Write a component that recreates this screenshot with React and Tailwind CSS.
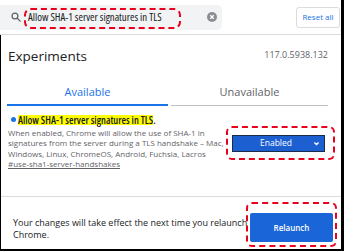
import React from "react";

export default function App() {
  return (
    <div className="relative w-[344px] h-[251px] overflow-hidden bg-white border-r-[3px] border-b-2 border-black font-['Open_Sans',sans-serif]">
      {/* header */}
      <div className="h-[35px] flex items-center border-b border-[#dadce0]">
        <div className="w-[222px] h-[25px] bg-[#f1f3f4] rounded-r-[5px] flex items-center">
          <svg className="ml-[11px] w-[10px] h-[10px]" viewBox="0 0 24 24" fill="none" stroke="#5f6368" strokeWidth="3">
            <circle cx="9.5" cy="9.5" r="7" />
            <path d="M15 15l7 7" strokeLinecap="round" />
          </svg>
          <span className="ml-[7px] text-[10.8px] font-stretch-[75%] text-[#202124] leading-none whitespace-nowrap">Allow SHA-1 server signatures in TLS</span>
          <div className="ml-auto mr-[5px] w-[10px] h-[10px] rounded-full bg-[#8a8e93] flex items-center justify-center">
            <svg viewBox="0 0 10 10" className="w-[10px] h-[10px]" stroke="white" strokeWidth="1.3">
              <path d="M3.3 3.3l3.4 3.4M6.7 3.3l-3.4 3.4" />
            </svg>
          </div>
        </div>
        <div className="ml-auto mr-[1px] w-[44px] h-[21px] flex items-center justify-center border border-[#dadce0] rounded-[3px] text-[8px] text-[#1a73e8] whitespace-nowrap">
          Reset all
        </div>
      </div>
      {/* body */}
      <div className="border-l border-black h-[214px] flex flex-col">
        <div className="flex items-start justify-between pl-[7px] pr-[13px] pt-[11px]">
          <div className="text-[13.5px] leading-[20px] h-[20px] text-[#202124]">Experiments</div>
          <div className="text-[9px] leading-[12px] mt-[3px] text-[#5f6368]">117.0.5938.132</div>
        </div>
        <div className="flex mt-[14px] pl-[6px] pr-[13px] gap-[3px]">
          <div className="w-[161px] h-[26px] flex items-center justify-center text-[11px] text-[#1a73e8] border-b-2 border-[#1a73e8]">Available</div>
          <div className="flex-1 h-[26px] flex items-center justify-center text-[11px] text-[#5f6368] border-b border-[#bdc1c6]">Unavailable</div>
        </div>
        <div className="flex pr-[16px] mt-[7px]">
          <div className="pl-[7px]">
            <div className="flex items-center h-[13px]">
              <div className="ml-[3px] w-[5px] h-[5px] rounded-full bg-[#1a73e8]" />
              <span className="ml-[2px] bg-[#ffff00] text-[10.3px] font-semibold font-stretch-[75%] text-[#202124] leading-[10px] whitespace-nowrap">Allow SHA-1 server signatures in TLS</span>
              <span className="text-[10.3px] font-semibold font-stretch-[75%] text-[#202124] leading-[10px]">.</span>
            </div>
            <div className="mt-[1.5px] text-[8px] leading-[10.5px] text-[#5f6368] whitespace-nowrap">
              <div>When enabled, Chrome will allow the use of SHA-1 in</div>
              <div>signatures from the server during a TLS handshake – Mac,</div>
              <div>Windows, Linux, ChromeOS, Android, Fuchsia, Lacros</div>
              <div className="underline">#use-sha1-server-handshakes</div>
            </div>
          </div>
          <div className="ml-auto mt-[22px] w-[93px] h-[17px] bg-[#1c5fd1] border border-[#1b2b4b] flex items-center text-white text-[8.5px]">
            <span className="flex-1 text-center pl-[6px]">Enabled</span>
            <svg className="w-[7px] h-[7px] mr-[4px]" viewBox="0 0 10 10" fill="none" stroke="white" strokeWidth="1.8">
              <path d="M2 3.5l3 3 3-3" />
            </svg>
          </div>
        </div>
        <div className="mt-auto border-t border-[#dadce0] h-[53px] flex items-start pt-[16px] pl-[12px] pr-[8px]">
          <div className="mt-[4px] text-[9px] leading-[12px] text-[#202124] whitespace-nowrap">
            <div>Your changes will take effect the next time you relaunch</div>
            <div>Chrome.</div>
          </div>
          <div className="ml-auto w-[83px] h-[29px] bg-[#1a66d8] rounded-[2px] flex items-center justify-center text-white text-[8px] font-semibold">
            Relaunch
          </div>
        </div>
      </div>
      {/* annotation boxes */}
      <div className="absolute left-[24px] top-[8px] w-[157px] h-[21px] border-2 border-dashed border-[#e8001c] rounded-[7px]" />
      <div className="absolute left-[226px] top-[126px] w-[109px] h-[34px] border-2 border-dashed border-[#e8001c] rounded-[6px]" />
      <div className="absolute left-[246px] top-[202px] w-[91px] h-[45px] border-2 border-dashed border-[#e8001c] rounded-[6px]" />
    </div>
  );
}
